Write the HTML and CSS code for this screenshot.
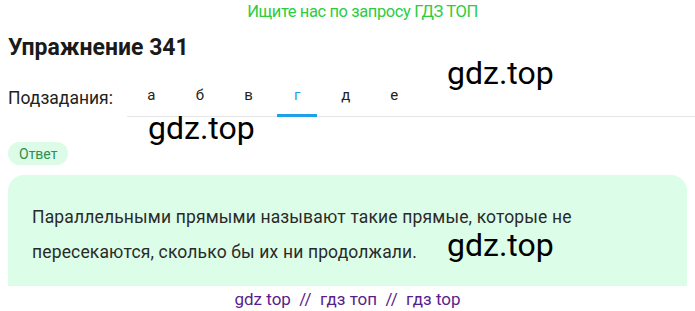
FILE: index.html
```html
<!DOCTYPE html>
<html lang="ru">
<head>
    <meta charset="UTF-8">
    <meta name="viewport" content="width=device-width, initial-scale=1.0">
    <title>Упражнение 341</title>
    <link rel="stylesheet" href="styles.css">
</head>
<body>

<div class="page">
    <div class="promo">Ищите нас по запросу ГДЗ ТОП</div>

    <h1 class="title">Упражнение 341</h1>

    <div class="subtasks">
        <span class="subtasks-label">Подзадания:</span>
        <div class="tabs">
            <span class="tab">а</span>
            <span class="tab">б</span>
            <span class="tab">в</span>
            <span class="tab active">г</span>
            <span class="tab">д</span>
            <span class="tab">е</span>
        </div>
    </div>

    <span class="badge">Ответ</span>

    <div class="answer-box">
        <p class="answer-text">Параллельными прямыми называют такие прямые, которые не пересекаются, сколько бы их ни продолжали.</p>
    </div>

    <div class="footer-links">gdz top &nbsp;//&nbsp; гдз топ &nbsp;//&nbsp; гдз top</div>

    <span class="mark mark-1">gdz.top</span>
    <span class="mark mark-2">gdz.top</span>
    <span class="mark mark-3">gdz.top</span>
</div>

</body>
</html>
```

FILE: styles.css
```css
body {
    margin: 0;
    font-family: Roboto, "Liberation Sans", sans-serif;
    background-color: white;
    color: #222;
}

.page {
    position: relative;
    width: 695px;
    height: 311px;
    overflow: hidden;
}

.promo {
    text-align: center;
    padding-left: 30px;
    color: #2ecc40;
    font-size: 16.5px;
    line-height: 24px;
    letter-spacing: -0.4px;
}

.title {
    margin: 11px 0 0 8px;
    font-size: 23px;
    line-height: 26px;
    font-weight: bold;
    color: #1a1a1a;
}

.subtasks {
    display: flex;
    align-items: flex-end;
    margin-top: 22px;
}

.subtasks-label {
    width: 130px;
    padding-left: 8px;
    box-sizing: border-box;
    font-size: 17.5px;
    line-height: 24px;
    padding-bottom: 7px;
}

.tabs {
    flex: 1;
    display: flex;
    border-bottom: 1px solid #e6e6e6;
    margin-left: -3px;
}

.tab {
    width: 48.6px;
    text-align: center;
    font-size: 15px;
    line-height: 24px;
    padding-bottom: 7px;
    color: #222;
}

.tab.active {
    color: #1ea0e6;
    border-bottom: 3px solid #1ea0e6;
    width: 40px;
    margin: 0 4.3px -1px;
}

.badge {
    display: inline-block;
    margin: 25px 0 0 8px;
    padding: 0 11px;
    height: 23px;
    line-height: 24px;
    border-radius: 12px;
    background-color: #dcfce7;
    color: #2f8f4e;
    font-size: 14px;
}

.answer-box {
    margin: 10px 8px 0;
    height: 111px;
    background-color: #dcfde8;
    border-radius: 16px 16px 0 0;
    padding: 25px 24px 0;
    box-sizing: border-box;
}

.answer-text {
    margin: 0;
    font-size: 17.5px;
    line-height: 35px;
    color: #2a2a2a;
    letter-spacing: 0.15px;
    max-width: 580px;
}

.footer-links {
    text-align: center;
    color: #5a1d8c;
    font-size: 17px;
    line-height: 24px;
    margin-top: 1px;
}

.mark {
    position: absolute;
    font-family: Roboto, sans-serif;
    font-size: 32px;
    line-height: 32px;
    color: #000;
}

.mark-1 { left: 447px; top: 57px; }
.mark-2 { left: 148px; top: 112px; }
.mark-3 { left: 447px; top: 229px; }
```
